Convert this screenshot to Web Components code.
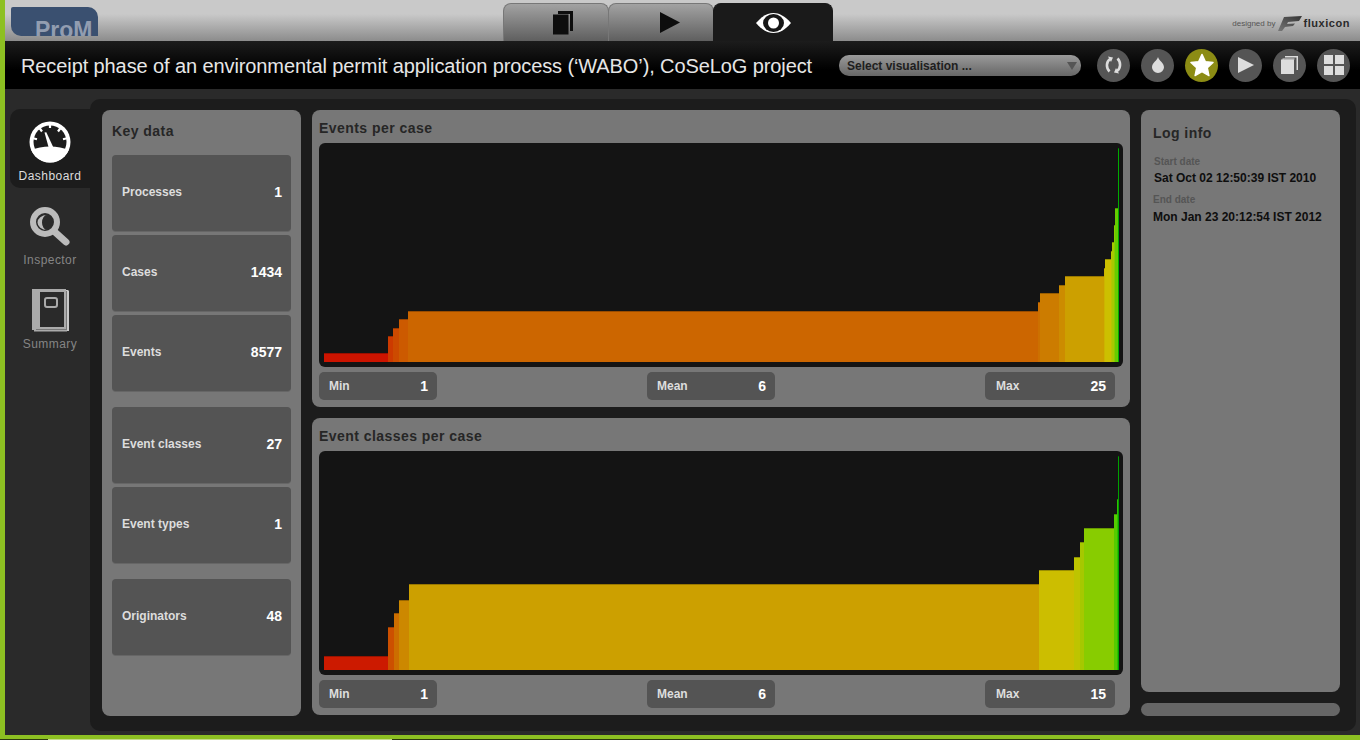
<!DOCTYPE html>
<html><head><meta charset="utf-8"><title>ProM</title>
<style>
html,body{margin:0;padding:0;height:740px;overflow:hidden;background:#8dc022;font-family:"Liberation Sans",Arial,sans-serif}
</style></head><body>
<prom-app></prom-app>
<script>
const def=(name,css,html)=>customElements.define(name,class extends HTMLElement{
  connectedCallback(){ if(this.shadowRoot) return; const s=this.attachShadow({mode:'open'}); s.innerHTML=`<style>${css}</style>${typeof html==='function'?html(this):html}`; }
});
const ICON={
 copy:c=>`<svg width="20" height="24" viewBox="0 0 20 24"><path fill="${c}" d="M5 0h15v20h-3V3H5z"/><rect x="0" y="3.500" width="15.500" height="20" fill="${c}"/></svg>`,
 play:c=>`<svg width="20" height="21" viewBox="0 0 20 21"><path fill="${c}" d="M0 0l20 10.500L0 21z"/></svg>`,
 eye:`<svg width="35" height="20" viewBox="0 0 35 20"><path fill="#fff" d="M0 10C6 3 12 0 17.500 0S29 3 35 10c-6 7-11.500 10-17.500 10S6 17 0 10z"/><ellipse cx="17.500" cy="10" rx="10.500" ry="9" fill="#161616"/><circle cx="17.500" cy="10" r="5.500" fill="#fff"/></svg>`,
 sync:`<svg width="17" height="18" viewBox="0 0 17 18" fill="none" stroke="#ddd" stroke-width="2.600"><path d="M5 3C1 6 1 12 4.500 15.500"/><path d="M12 15C16 12 16 6 12.500 2.500"/><path fill="#ddd" stroke="none" d="M3 0.500l5 1-2 4.500zM14 17.500l-5-1 2-4.500z"/></svg>`,
 drop:`<svg width="12" height="16" viewBox="0 0 12 16"><path fill="#ddd" d="M6 0c.8 3.500 6 6 6 10.200A6 5.800 0 0 1 0 10.200C0 6 5.200 3.500 6 0z"/></svg>`,
 star:`<svg width="24" height="24" viewBox="0 0 26 25"><path fill="#fff" stroke="#fff" stroke-width="1.500" stroke-linejoin="round" d="M13 1l3.600 7.800 8.400 1-6.200 5.800 1.700 8.400L13 19.800 5.500 24l1.700-8.400L1 9.800l8.400-1z"/></svg>`,
 playS:`<svg width="16" height="16" viewBox="0 0 16 16"><path fill="#ddd" d="M0 0l16 8L0 16z"/></svg>`,
 copyS:`<svg width="17" height="18" viewBox="0 0 17 18"><path fill="#ddd" d="M4 0h13v14h-1.500V1.500H4z"/><path fill="#ddd" d="M1.500 2.500h12v1H2.500V4H1.500z"/><rect x="0" y="3.500" width="13" height="14.500" fill="#ddd"/></svg>`,
 grid:`<svg width="20" height="20" viewBox="0 0 20 20" fill="#ddd"><rect width="9" height="9"/><rect x="11" width="9" height="9"/><rect y="11" width="9" height="9"/><rect x="11" y="11" width="9" height="9"/></svg>`,
 gauge:`<svg width="42" height="42" viewBox="0 0 42 42"><clipPath id="gc"><circle cx="21" cy="21" r="20.500"/></clipPath><circle cx="21" cy="21" r="20.500" fill="#fff"/><circle cx="21" cy="21" r="16.500" fill="#1c1c1c"/><path fill="#fff" d="M0 42V29.500C8 26.800 14 25.600 21 25.600s13 1.200 21 3.900V42z" clip-path="url(#gc)"/><path stroke="#fff" stroke-width="2.200" d="M21 3v4M10.500 7l2.500 3.500M31.500 7L29 10.500M3 17l5 1.300M39 17l-5 1.300"/><path fill="#fff" d="M15.500 11.500l1.800-.3 7.200 15.500-4.500 1z"/></svg>`,
 mag:`<svg width="42" height="42" viewBox="0 0 42 42"><path stroke="#bbb" stroke-width="7" stroke-linecap="round" d="M27 28l10 9"/><circle cx="16" cy="17" r="12" fill="#2a2a2a" stroke="#bbb" stroke-width="6"/><path fill="#bbb" d="M18 10A9.500 7.500 0 0 0 18 25A5 7.500 0 0 1 18 10z"/></svg>`,
 book:`<svg width="37" height="43" viewBox="0 0 37 43"><path fill="#c8c8c8" d="M33 1h3l1 1v40H33z"/><path fill="#aaa" d="M0 0h34v41H0z"/><path fill="#aaa" d="M2 41h33v1.500H2z"/><rect x="34" y="2" width="1" height="39" fill="#777"/><rect x="8" y="3" width="24" height="35" fill="#2a2a2a"/><rect x="13" y="9" width="12" height="9" rx="2" fill="none" stroke="#aaa" stroke-width="2"/><rect x="4" y="40" width="30" height="1" fill="#777"/></svg>`
};
def('prom-logo',`:host{display:block;width:87px;height:29px;margin:7px 0 0 6px;background:#3a5070;border-radius:2px 10px 0 10px;overflow:hidden;flex:none}
 span{display:block;font:bold 23px/23px "Liberation Sans",sans-serif;color:#929db0;padding:12px 0 0 24px}`,`<span>ProM</span>`);
def('mode-tab',`:host{display:flex;align-items:center;justify-content:center;height:38px;box-sizing:border-box;border-radius:8px 8px 0 0;margin-top:3px;border:1px solid #777;border-bottom:0;background:linear-gradient(#a2a2a2,#5f5f5f)}
 :host([active]){background:#1a1a1a;border-color:#1a1a1a}`,`<slot></slot>`);
def('brand-mark',`:host{display:flex;align-items:center;flex:none;color:#555;font:8px "Liberation Sans",sans-serif;margin:14px 10px 0 0;height:18px}
 b{font:bold 11px "Liberation Sans",sans-serif;color:#2a2a2a;letter-spacing:.55px;margin-left:1px}svg{margin-left:3px}`,
 `<span>designed by</span><svg width="24" height="15" viewBox="0 0 24 15"><defs><linearGradient id="fw" x1="1" y1="0" x2="0" y2="1"><stop offset="0" stop-color="#333"/><stop offset="1" stop-color="#777"/></linearGradient></defs><path fill="url(#fw)" d="M6 1L24 0l-3 5-11 1-1 2 8-.5L15 10l-8 1-3 4H0z"/></svg><b>fluxicon</b>`);
def('top-bar',`:host{display:flex;height:41px;background:linear-gradient(#c9c9c9 0,#c9c9c9 14px,#8c8c8c 41px);position:relative}
 .tabs{display:flex;margin-left:405px;flex:none}.tabs mode-tab:nth-child(1){width:106px;padding-left:14px}.tabs mode-tab:nth-child(2){width:106px;margin-left:-1px;padding-left:18px}.tabs mode-tab:nth-child(3){width:120px;margin-left:-1px;padding-top:1px}
 .sp{flex:1}`,
 `<prom-logo></prom-logo><div class="tabs"><mode-tab>${ICON.copy('#0d0d0d')}</mode-tab><mode-tab>${ICON.play('#0d0d0d')}</mode-tab><mode-tab active>${ICON.eye}</mode-tab></div><div class="sp"></div><brand-mark></brand-mark>`);
def('round-btn',`:host{display:flex;width:33px;height:33px;border-radius:50%;background:#555;align-items:center;justify-content:center;flex:none}:host([on]){background:#8c8c14}`,`<slot></slot>`);
def('vis-select',`:host{display:flex;align-items:center;justify-content:space-between;box-sizing:border-box;width:242px;height:21px;border-radius:10px;background:linear-gradient(#9a9a9a,#666);padding:1px 4px 0 8px;color:#1e1e1e;font:bold 12px "Liberation Sans",sans-serif;flex:none}
 i{width:0;height:0;border:5px solid transparent;border-top:8px solid #555;border-bottom:0}`,`<slot></slot><i></i>`);
def('title-bar',`:host{display:flex;align-items:center;height:48px;background:linear-gradient(#1c1c1c,#000 60%);color:#e6e6e6;padding-left:16px}
 h1{font:20px "Liberation Sans",sans-serif;letter-spacing:-.1px;margin:0;width:818px;white-space:nowrap;flex:none;padding-top:3px}
 vis-select{margin-right:16px}.b{display:flex;gap:11px}`,
 `<h1>Receipt phase of an environmental permit application process (‘WABO’), CoSeLoG project</h1><vis-select>Select visualisation ...</vis-select><div class="b"><round-btn>${ICON.sync}</round-btn><round-btn>${ICON.drop}</round-btn><round-btn on>${ICON.star}</round-btn><round-btn>${ICON.playS}</round-btn><round-btn>${ICON.copyS}</round-btn><round-btn>${ICON.grid}</round-btn></div>`);
def('nav-item',`:host{display:flex;flex-direction:column;align-items:center;box-sizing:border-box;height:79px;width:80px;padding-top:12px;border-radius:10px 0 0 10px;color:#858585;font:12px "Liberation Sans",sans-serif;letter-spacing:.45px}
 :host([active]){background:#1c1c1c;color:#ddd}
 .l{margin-top:auto;padding-bottom:5px;line-height:14px}`,e=>`<slot></slot><span class="l">${e.getAttribute('label')}</span>`);
def('side-nav',`:host{display:flex;flex-direction:column;gap:5px;width:85px;box-sizing:border-box;padding:20px 0 0 5px;flex:none}`,
 `<nav-item active label="Dashboard">${ICON.gauge}</nav-item><nav-item label="Inspector">${ICON.mag}</nav-item><nav-item label="Summary">${ICON.book}</nav-item>`);
def('data-card',`:host{display:flex;align-items:center;justify-content:space-between;box-sizing:border-box;height:76px;margin-bottom:1px;background:#545454;border-radius:4px;padding:0 9px 3px 10px;color:#ddd;font:bold 12px "Liberation Sans",sans-serif;box-shadow:0 1px 0 #666}
 b{color:#fff;font-size:14px}`,e=>`<span>${e.getAttribute('label')}</span><b>${e.getAttribute('value')}</b>`);
const H=`font:bold 14px "Liberation Sans",sans-serif;color:#262626;letter-spacing:.45px;margin:0`;
def('key-data',`:host{display:block;box-sizing:border-box;height:606px;background:#777;border-radius:8px;padding:13px 10px 0}
 h2{${H};height:32px;line-height:16px}.g{display:flex;flex-direction:column;gap:3px;margin-bottom:15px}`,
 `<h2>Key data</h2><div class="g"><data-card label="Processes" value="1"></data-card><data-card label="Cases" value="1434"></data-card><data-card label="Events" value="8577"></data-card></div>
 <div class="g"><data-card label="Event classes" value="27"></data-card><data-card label="Event types" value="1"></data-card></div><div class="g"><data-card label="Originators" value="48"></data-card></div>`);
def('stat-chip',`:host{display:flex;align-items:center;justify-content:space-between;box-sizing:border-box;height:28px;background:#545454;border-radius:5px;padding:0 9px 0 10px;color:#ddd;font:bold 12px "Liberation Sans",sans-serif}
 b{color:#fff;font-size:14px}`,e=>`<span>${e.getAttribute('label')}</span><b>${e.getAttribute('value')}</b>`);
def('bar-chart',`:host{display:block;height:224px;background:#141414;border-radius:6px;overflow:hidden}svg{display:block}`,e=>{
 const d=JSON.parse(e.getAttribute('data')); const base=+e.getAttribute('base'); const oy=+e.getAttribute('oy');
 let r='';
 d.forEach(([x0,x1,top,c])=>{r+=`<rect x="${x0-319}" y="${top-oy}" width="${x1-x0}" height="${base-top}" fill="${c}"/><rect x="${x0-319}" y="${top-oy}" width="${x1-x0}" height="1" fill="#000" opacity=".25"/>`});
 return `<svg width="804" height="224" viewBox="0 0 804 224">${r}</svg>`;
});
def('chart-panel',`:host{display:block;box-sizing:border-box;height:297px;background:#777;border-radius:8px;padding:0 7px}
 h2{${H};height:33px;line-height:36px}.s{display:flex;justify-content:space-between;width:796px;margin-top:5px}
 .s stat-chip:nth-child(1){width:118px}.s stat-chip:nth-child(2){width:128px}.s stat-chip:nth-child(3){width:130px;padding-left:11px}`,
 e=>`<h2>${e.getAttribute('heading')}</h2><slot></slot><div class="s"><stat-chip label="Min" value="${e.getAttribute('min')}"></stat-chip><stat-chip label="Mean" value="${e.getAttribute('mean')}"></stat-chip><stat-chip label="Max" value="${e.getAttribute('max')}"></stat-chip></div>`);
def('log-info',`:host{display:flex;flex-direction:column;gap:11px}
 .p{box-sizing:border-box;height:582px;background:#777;border-radius:8px;padding:15px 12px 0}
 .bar{height:13px;background:#666;border-radius:7px}
 h2{${H};height:31px;line-height:16px}
 small{display:block;font:bold 10px/12px "Liberation Sans",sans-serif;color:#555;margin:0 0 3px 1px}
 p{margin:0 0 8px;font:bold 12px/15px "Liberation Sans",sans-serif;color:#0e0e0e}p.a{margin-left:1px}`,
 `<div class="p"><h2>Log info</h2><small>Start date</small><p class="a">Sat Oct 02 12:50:39 IST 2010</p><small style="margin:0 0 4px">End date</small><p>Mon Jan 23 20:12:54 IST 2012</p></div><div class="bar"></div>`);
def('main-panel',`:host{display:grid;grid-template-columns:199px 818px 199px;column-gap:11px;align-items:start;box-sizing:border-box;width:1266px;height:632px;margin:10px 0 0 0;padding:11px 16px 0 12px;background:#1c1c1c;border-radius:10px}
 .m{display:flex;flex-direction:column;gap:11px}`,`<key-data></key-data><div class="m"><slot></slot></div><log-info></log-info>`);
def('prom-app',`:host{display:block;box-sizing:border-box;width:1360px;height:740px;padding:0 0 0 5px}
 .b{display:flex;height:646px;background:#2a2a2a}
 .f{height:1px;margin:4px 0 0 -5px;background:linear-gradient(90deg,#2c3a10 48px,#c5dc8c 48px,#c5dc8c 392px,#2c3a10 392px,#2c3a10 1100px,#8dc022 1100px)}`,`<top-bar></top-bar><title-bar></title-bar><div class="b"><side-nav></side-nav><main-panel>
 <chart-panel heading="Events per case" min="1" mean="6" max="25"><bar-chart base="362" oy="143" data='${JSON.stringify([
 [324,388,353,'#cc1400'],[388,393,336,'#cc3a00'],[393,399,328,'#cc4a00'],[399,408,319,'#cc5a00'],[408,1038,311,'#cc6600'],[1038,1040,302,'#cc7000'],[1040,1059,293,'#cc7c00'],[1059,1065,285,'#cc8c00'],[1065,1104,276,'#cca000'],[1104,1105,268,'#ccb400'],[1105,1111,259,'#ccc000'],[1111,1112,251,'#b8c400'],[1112,1114,242,'#a8c800'],[1114,1115,225,'#88cc00'],[1115,1118,208,'#66cc00'],[1118,1119,148,'#00aa00']])}'></bar-chart></chart-panel>
 <chart-panel heading="Event classes per case" min="1" mean="6" max="15"><bar-chart base="670" oy="451" data='${JSON.stringify([
 [324,388,656,'#cc1a00'],[388,394,627,'#cc5000'],[394,399,613,'#cc6e00'],[399,409,600,'#cc8800'],[409,1039,584,'#cca000'],[1039,1074,570,'#ccbe00'],[1074,1080,557,'#bec400'],[1080,1084,542,'#a6c800'],[1084,1114,528,'#88cc00'],[1114,1117,514,'#55cc00'],[1117,1118,499,'#30c000'],[1118,1119,456,'#00a000']])}'></bar-chart></chart-panel>
 </main-panel></div><div class="f"></div>`);
</script>
</body></html>
